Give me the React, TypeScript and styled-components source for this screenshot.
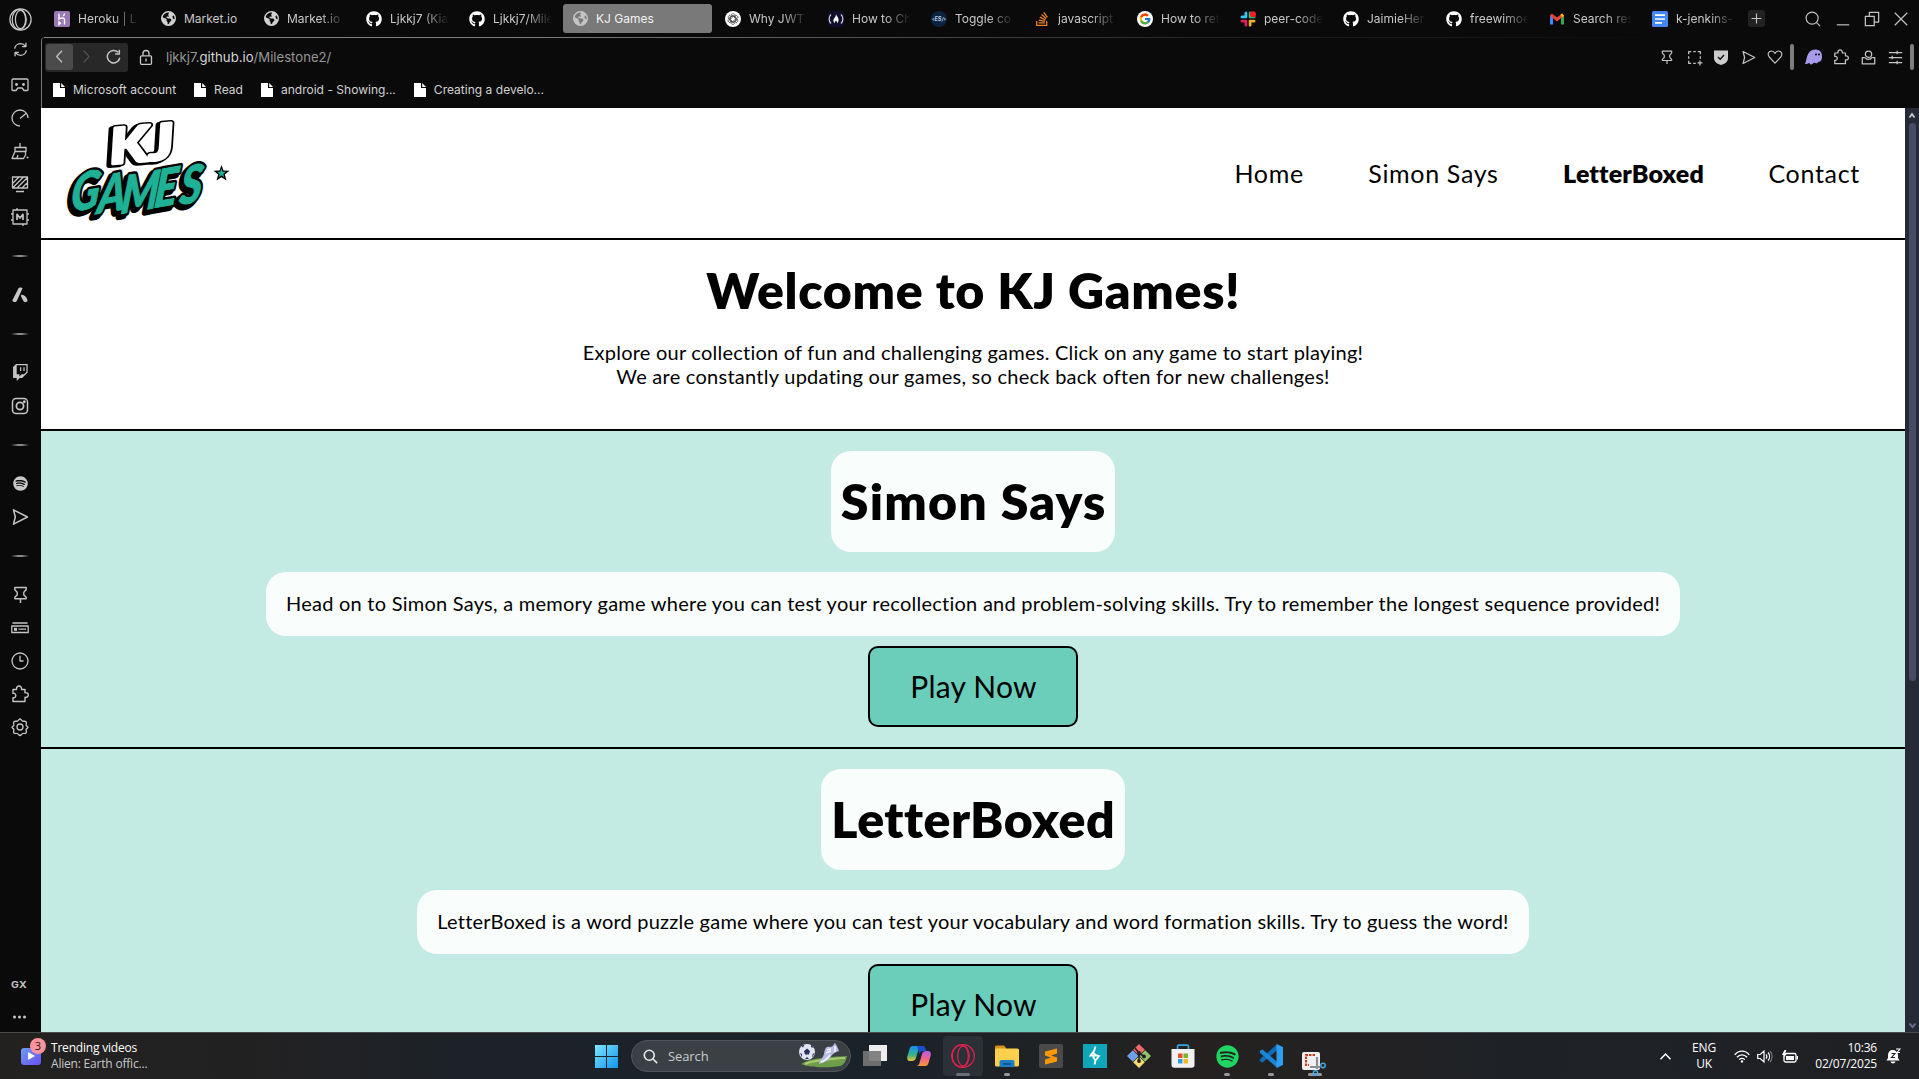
import React from 'react';
import styled, { createGlobalStyle, css } from 'styled-components';
import { FaGithub, FaSpotify, FaStackOverflow } from 'react-icons/fa';
import { FaEarthAmericas } from 'react-icons/fa6';
import { FcGoogle } from 'react-icons/fc';
import { BsTwitch } from 'react-icons/bs';

const GlobalStyle = createGlobalStyle`
  * { box-sizing: border-box; }
  html, body { margin: 0; padding: 0; background: #0a0a0a; overflow: hidden; }
  h1, h2, p { margin: 0; font-weight: inherit; }
  svg { display: block; flex: none; overflow: visible; }
`;

const uiFont = `Inter, 'Liberation Sans', sans-serif`;
const siteFont = `Lato, 'Open Sans', sans-serif`;
const winFont = `'Open Sans', 'Noto Sans', sans-serif`;

const Screen = styled.div`
  width: 1919px;
  height: 1079px;
  display: flex;
  flex-direction: column;
  overflow: hidden;
  background: #0a0a0a;
  color: #c8c8c8;
  font-family: ${uiFont};
`;
const Browser = styled.div`
  height: 1032px;
  display: flex;
`;

/* ---------- sidebar ---------- */
const Sidebar = styled.aside`
  width: 41px;
  display: flex;
  flex-direction: column;
  align-items: center;
  padding-right: 1px;
  flex: none;
`;
const SideCell = styled.div<{ $h?: number }>`
  height: ${(p) => p.$h ?? 33}px;
  width: 40px;
  display: flex;
  align-items: center;
  justify-content: center;
  flex: none;
`;
const SideSeparator = styled.div`
  height: 45px;
  display: flex;
  align-items: center;
  &::before {
    content: '';
    width: 18px;
    height: 2px;
    background: linear-gradient(90deg, transparent, #8a8a8a 40%, #8a8a8a 60%, transparent);
  }
`;
const SideSpacer = styled.div`
  flex: 1;
`;
const GxLabel = styled.span`
  font-size: 10.5px;
  font-weight: 700;
  letter-spacing: 0.3px;
  color: #c4c4c4;
  transform: translateX(-1px) scaleY(0.86);
`;

/* ---------- browser chrome ---------- */
const Main = styled.div`
  flex: 1;
  display: flex;
  flex-direction: column;
  min-width: 0;
`;
const TabBar = styled.div`
  height: 37px;
  display: flex;
  align-items: center;
  padding-left: 4px;
`;
const Tab = styled.div<{ $active?: boolean; $w?: number }>`
  width: ${(p) => p.$w ?? 99}px;
  height: 29px;
  margin-right: 4px;
  padding: 0 2px 0 9px;
  border-radius: 3px;
  display: flex;
  align-items: center;
  gap: 8px;
  flex: none;
  background: ${(p) => (p.$active ? '#797979' : 'transparent')};
  color: ${(p) => (p.$active ? '#f2f2f2' : '#c8c8c8')};
`;
const TabIcon = styled.span`
  width: 16px;
  height: 16px;
  display: flex;
  align-items: center;
  justify-content: center;
  flex: none;
`;
const TabTitle = styled.span<{ $fade?: boolean }>`
  flex: 1;
  white-space: nowrap;
  font-size: 12px;
  line-height: 18px;
  ${(p) =>
    p.$fade &&
    css`
      mask-image: linear-gradient(90deg, #000 52%, transparent 92%);
    `}
`;
const NewTab = styled.div`
  width: 17px;
  height: 17px;
  margin-left: 2px;
  border-radius: 3px;
  background: #222;
  display: flex;
  align-items: center;
  justify-content: center;
`;
const WindowControls = styled.div`
  margin-left: auto;
  margin-right: 3px;
  display: flex;
`;
const ControlButton = styled.div`
  width: 29.3px;
  height: 28px;
  display: flex;
  align-items: center;
  justify-content: center;
`;
const Frame = styled.div`
  height: 71px;
  display: flex;
  flex-direction: column;
  border-left: 1px solid #777;
  border-top-left-radius: 4px;
  position: relative;
  &::before {
    content: '';
    position: absolute;
    top: 0;
    left: 2px;
    right: 0;
    height: 1px;
    background: linear-gradient(90deg, #858585 0, #7c7c7c 500px, #4d4d4d 850px, #242424 1150px, #0c0c0c 1600px);
  }
`;
const Toolbar = styled.div`
  height: 39px;
  padding: 1px 4px 0 3px;
  display: flex;
  align-items: center;
`;
const NavGroup = styled.div`
  width: 83px;
  height: 29px;
  padding: 1px;
  border-radius: 3px;
  background: #282828;
  display: flex;
`;
const NavButton = styled.div<{ $lit?: boolean }>`
  width: 27px;
  height: 26px;
  border-radius: 3px;
  background: ${(p) => (p.$lit ? '#4b4b4b' : 'transparent')};
  display: flex;
  align-items: center;
  justify-content: center;
`;
const Address = styled.div`
  display: flex;
  align-items: center;
  gap: 13px;
  margin-left: 11px;
  font-size: 13.15px;
  color: #979797;
  b {
    font-weight: 400;
    color: #d6d6d6;
  }
`;
const ToolIcons = styled.div`
  margin-left: auto;
  display: flex;
  align-items: center;
`;
const ToolCell = styled.div<{ $w?: number; $inset?: number }>`
  width: ${(p) => p.$w ?? 27}px;
  padding-left: ${(p) => p.$inset ?? 0}px;
  display: flex;
  align-items: center;
  justify-content: center;
`;
const ToolDivider = styled.div`
  width: 4px;
  height: 26px;
  border-radius: 2px;
  background: #7d7d7d;
`;
const Bookmarks = styled.div`
  display: flex;
  align-items: center;
  height: 27px;
  padding-left: 11px;
  gap: 18px;
  font-size: 12px;
  letter-spacing: 0.02px;
  color: #d2d2d2;
`;
const Bookmark = styled.div`
  display: flex;
  align-items: center;
  gap: 8px;
`;

/* ---------- web page ---------- */
const Viewport = styled.div`
  height: 924px;
  display: flex;
`;
const Page = styled.div`
  width: 1864px;
  height: 924px;
  overflow: hidden;
  background: #fff;
  color: #000;
  font-family: ${siteFont};
`;
const Header = styled.header`
  height: 132px;
  border-bottom: 2px solid #000;
  display: flex;
  justify-content: space-between;
  padding: 4px 45px 0 20px;
`;
const NavLinks = styled.nav`
  display: flex;
  align-items: center;
  gap: 64.5px;
  height: 122px;
`;
const NavLink = styled.a<{ $bold?: boolean; $track: number }>`
  font-size: 25px;
  line-height: 30px;
  white-space: nowrap;
  font-weight: ${(p) => (p.$bold ? 800 : 400)};
  letter-spacing: ${(p) => p.$track}px;
`;
const Hero = styled.section`
  height: 191px;
  border-bottom: 2px solid #000;
  text-align: center;
  padding-top: 20px;
`;
const Title = styled.h1<{ $track: number }>`
  font-size: 50px;
  line-height: 60px;
  font-weight: 800;
  letter-spacing: ${(p) => p.$track}px;
  margin-right: -${(p) => p.$track}px;
  white-space: nowrap;
`;
const Copy = styled.p<{ $track: number }>`
  font-size: 20px;
  line-height: 24px;
  letter-spacing: ${(p) => p.$track}px;
  white-space: nowrap;
`;
const HeroCopy = styled.div`
  margin-top: 20px;
`;
const GameSection = styled.section`
  height: 318px;
  padding-top: 20px;
  background: #c4ebe3;
  border-bottom: 2px solid #000;
  display: flex;
  flex-direction: column;
  align-items: center;
`;
const Card = styled.div<{ $w: number }>`
  width: ${(p) => p.$w}px;
  padding-bottom: 2px;
  border-radius: 20px;
  background: #f9fdfc;
  display: flex;
  justify-content: center;
  align-items: center;
`;
const GameTitle = styled(Card)`
  height: 101px;
`;
const GameText = styled(Card)`
  height: 64px;
  margin-top: 20px;
`;
const PlayButton = styled.button`
  width: 210px;
  height: 81px;
  margin-top: 10px;
  border: 2px solid #000;
  border-radius: 10px;
  background: #6bceba;
  color: #000;
  font: 400 30px/36px ${siteFont};
  letter-spacing: 0.2px;
  padding: 0 0 2px 1px;
`;
const ScrollTrack = styled.div`
  width: 14px;
  background: #262a37;
  display: flex;
  flex-direction: column;
  align-items: center;
  padding: 5px 0 4px;
`;
const ScrollThumb = styled.div`
  width: 7px;
  height: 558px;
  margin-top: 5px;
  margin-bottom: auto;
  border-radius: 4px;
  background: #474b63;
`;

/* ---------- taskbar ---------- */
const Taskbar = styled.footer`
  height: 47px;
  border-top: 1px solid #4a4a4c;
  background: linear-gradient(90deg, #232120 0, #222122 250px, #1c2228 480px, #1a222a 850px, #1e2226 1000px, #242120 1180px, #242122 1330px, #1e2226 1500px, #1f2024 1919px);
  display: flex;
  align-items: center;
  font-family: ${winFont};
  color: #fff;
`;
const Widget = styled.div`
  width: 586px;
  flex: none;
  padding-left: 21px;
  display: flex;
  align-items: center;
  gap: 10px;
`;
const WidgetIcon = styled.div`
  width: 20px;
  height: 17px;
  border-radius: 3px;
  background: linear-gradient(135deg, #6a9cf5, #6a4ff0);
  position: relative;
  display: flex;
  align-items: center;
  justify-content: center;
`;
const CountBadge = styled.span`
  position: absolute;
  left: 9px;
  top: -10px;
  width: 16px;
  height: 16px;
  border-radius: 8px;
  background: #f9939d;
  color: #2a1012;
  font-size: 11px;
  line-height: 16px;
  text-align: center;
`;
const WidgetText = styled.div`
  font-size: 12px;
  line-height: 16px;
  letter-spacing: -0.2px;
  white-space: nowrap;
  span {
    display: block;
    color: #c9c9c9;
  }
`;
const TaskCell = styled.div<{ $active?: boolean; $dot?: 'wide' | 'small' }>`
  width: 40px;
  height: 40px;
  margin-right: 4px;
  border-radius: 4px;
  display: flex;
  align-items: center;
  justify-content: center;
  position: relative;
  flex: none;
  background: ${(p) => (p.$active ? '#2b3137' : 'transparent')};
  ${(p) =>
    p.$dot &&
    css`
      &::after {
        content: '';
        position: absolute;
        bottom: 0;
        width: ${p.$dot === 'wide' ? 14 : 6}px;
        height: 3px;
        border-radius: 2px;
        background: ${p.$active ? '#6c7074' : '#96999c'};
      }
    `}
`;
const SnipIcon = styled.svg`
  margin: 15px 2px 0 0;
  z-index: 1;
`;
const SearchBox = styled.div`
  width: 220px;
  height: 32px;
  margin: 0 4px 0 1px;
  border-radius: 16px;
  border: 1px solid #50565b;
  background: #3a4044;
  display: flex;
  align-items: center;
  padding: 0 3px 0 11px;
  color: #c9cccf;
  font-size: 13px;
  letter-spacing: -0.1px;
  span {
    flex: 1;
    margin-left: 10px;
  }
`;
const Tray = styled.div`
  margin-left: auto;
  display: flex;
  align-items: center;
  padding-right: 11px;
  font-size: 12px;
  line-height: 16px;
  letter-spacing: -0.2px;
`;
const TrayText = styled.div<{ $w: number; $right?: boolean }>`
  width: ${(p) => p.$w}px;
  text-align: ${(p) => (p.$right ? 'right' : 'center')};
  white-space: nowrap;
`;
const TrayIcon = styled.div<{ $w: number }>`
  width: ${(p) => p.$w}px;
  display: flex;
  justify-content: center;
`;

/* ---------- icons ---------- */
type LineProps = { size?: number; w?: number; color?: string; children: React.ReactNode };
const Line = ({ size = 18, w = 1.3, color = '#c4c4c4', children }: LineProps) => (
  <svg width={size} height={size} viewBox="0 0 18 18" fill="none" stroke={color} strokeWidth={w} strokeLinejoin="round">
    {children}
  </svg>
);
const PinIcon = ({ size }: { size?: number }) => (
  <Line size={size} w={1.5}>
    <path d="M3 1.500h12v2.500L12.500 6.500v3l2.500 2.500v1.500H3V12l2.500-2.500v-3L3 4zM9 13.500V18" />
  </Line>
);
const SendIcon = ({ size }: { size?: number }) => (
  <Line size={size} w={1.5}>
    <path d="M2.500 1.800 16.500 9 2.500 16.200 4.300 9z" />
  </Line>
);
const PuzzleIcon = ({ size }: { size?: number }) => (
  <Line size={size} w={1.4}>
    <path d="M2 4.500h3.600c-.4-2 .8-3.500 2.400-3.500s2.900 1.500 2.500 3.500H14v3.200c2-.3 3.300.8 3.300 2.300S16 12.600 14 12.300V16.500H2v-3.800c1.700.3 2.800-.8 2.800-2.200S3.700 8 2 8.300z" />
  </Line>
);
const Globe = ({ c = '#d0d0d0' }: { c?: string }) => <FaEarthAmericas size={15} color={c} />;
const Github = () => <FaGithub size={16} color="#fff" />;

const HerokuIcon = () => (
  <svg width="16" height="16" viewBox="0 0 16 16">
    <rect width="16" height="16" rx="2" fill="#9a78b8" />
    <path d="M5 2.500V8c3-1.600 5.500-1.300 5.500.8v4.700M10.500 2.500c0 1-.5 1.800-1.300 2.600M5 10.800v2.700l1.500-1.300z" fill="none" stroke="#fff" strokeWidth="1.400" />
  </svg>
);
const GptIcon = () => (
  <svg width="16" height="16" viewBox="0 0 16 16">
    <circle cx="8" cy="8" r="8" fill="#fff" />
    <g fill="none" stroke="#333" strokeWidth=".75">
      {[0, 60, 120, 180, 240, 300].map((a) => (
        <path key={a} transform={`rotate(${a} 8 8)`} d="M6 8V4.800c0-2.200 2.800-2.800 3.900-1.200M6 5.800l2.200-1.300 2.800 1.600" />
      ))}
    </g>
  </svg>
);
const FccIcon = () => (
  <svg width="18" height="16" viewBox="0 0 18 16">
    <rect x="1" width="16" height="16" rx="3" fill="#0f0f2c" />
    <path d="M4 3.500C1.500 6 1.500 10 4 12.500M14 3.500c2.500 2.500 2.500 6.500 0 9" fill="none" stroke="#cfcfe6" strokeWidth="1.200" />
    <path d="M9 3c.5 2.500 3 3.500 2.500 6.500-.2 1.500-1 2.500-1.500 2.700.3-1.200-.2-2-1-2.700-.8.7-1.300 1.500-1 2.700C7 11.500 6 10 6.500 8.500 7 7 9 5.500 9 3z" fill="#fff" />
  </svg>
);
const Es6Badge = styled.span`
  width: 16px;
  height: 16px;
  border-radius: 8px;
  background: #0c2340;
  color: #b8cbe0;
  font: italic 700 5.5px/16px ${uiFont};
  text-align: center;
`;
const SlackIcon = () => (
  <svg width="16" height="16" viewBox="0 0 16 16" strokeWidth="3" strokeLinecap="round">
    <path d="M6 2v4M2 6h4" stroke="#36c5f0" />
    <path d="M10 2v4M10 6h4" stroke="#2eb67d" />
    <path d="M10 10v4M10 10h4" stroke="#ecb22e" />
    <path d="M6 10v4M2 10h4" stroke="#e01e5a" />
    <path d="M0 8h16M8 0v16" stroke="#0a0a0a" strokeWidth="1" />
    <circle cx="13" cy="3.200" r="3" fill="#f21d1d" />
  </svg>
);
const GmailIcon = () => (
  <svg width="14" height="12" viewBox="0 0 14 12" fill="none" strokeWidth="3">
    <path d="M1.500 2v9.500" stroke="#4285f4" />
    <path d="M12.500 2v9.500" stroke="#34a853" />
    <path d="M.9 1.600 7 6.500l6.100-4.900" stroke="#ea4335" />
    <path d="M11.200 3 13.100 1.600" stroke="#fbbc04" />
  </svg>
);
const DocsIcon = () => (
  <svg width="16" height="16" viewBox="0 0 16 16">
    <rect width="16" height="16" rx="1.500" fill="#4285f4" />
    <path d="M3 4.200h10M3 8h10M3 11.800h7" stroke="#fff" strokeWidth="1.700" />
  </svg>
);
const GoogleIcon = () => (
  <svg width="16" height="16" viewBox="0 0 16 16">
    <circle cx="8" cy="8" r="8" fill="#fff" />
    <g transform="translate(1.500 1.500)"><FcGoogle size={13} /></g>
  </svg>
);
const FileIcon = () => (
  <svg width="12" height="14" viewBox="0 0 12 14">
    <path d="M0 0h7v5h5v9H0z" fill="#fff" />
    <path d="M8.200 0 12 3.900H8.200z" fill="#fff" />
  </svg>
);

const starPath = 'M0-8 2-2.500 8-2.200 3.300 1.600 5 7.500 0 4.200-5 7.500-3.300 1.600-8-2.200-2-2.500z';
const LogoText = styled.text`
  font-family: ${siteFont};
  font-weight: 900;
  font-style: italic;
  stroke-linejoin: round;
`;
type BrushProps = { dx?: number; dy?: number; fill: string; width: number };
const Brush = ({ dx = 0, dy = 0, fill, width }: BrushProps) => (
  <g transform={`translate(${dx + 19} ${dy}) skewX(-12) scale(.78 1)`}>
    <LogoText x="14 49 79 120 152" y="100 102 102 96 93" rotate="-8 -8 -8 -8 -8" fontSize="53" fill={fill} stroke={fill} strokeWidth={width}>GAMES</LogoText>
  </g>
);
const Logo = () => (
  <svg width="176" height="112" viewBox="0 0 176 112">
    <g transform="translate(50 52) rotate(-5)">
      <LogoText x="-3" y="1" fontSize="49" textLength="64" lengthAdjust="spacingAndGlyphs" fill="#000" stroke="#000" strokeWidth="6">KJ</LogoText>
      <LogoText x="0" y="0" fontSize="49" textLength="64" lengthAdjust="spacingAndGlyphs" fill="#000" stroke="#000" strokeWidth="6">KJ</LogoText>
      <LogoText x="0" y="0" fontSize="49" textLength="64" lengthAdjust="spacingAndGlyphs" fill="#fff" stroke="#fff" strokeWidth="3">KJ</LogoText>
    </g>
    <Brush dx={-3} dy={3} fill="#000" width={7} />
    <Brush fill="#000" width={6} />
    <Brush fill="#1fb195" width={1} />
    <path transform="translate(160.500 61)" d={starPath} fill="#000" />
    <path transform="translate(160.500 61) scale(.55)" d={starPath} fill="#1fb195" />
  </svg>
);

const tabs: { icon: React.ReactNode; title: string; fade?: boolean; active?: boolean; w?: number }[] = [
  { icon: <HerokuIcon />, title: 'Heroku | L', fade: true, w: 102 },
  { icon: <Globe />, title: 'Market.io' },
  { icon: <Globe />, title: 'Market.io', fade: true },
  { icon: <Github />, title: 'Ljkkj7 (Kia', fade: true },
  { icon: <Github />, title: 'Ljkkj7/Mile', fade: true },
  { icon: <Globe c="#c4c4c4" />, title: 'KJ Games', active: true, w: 149 },
  { icon: <GptIcon />, title: 'Why JWT', fade: true },
  { icon: <FccIcon />, title: 'How to Ch', fade: true },
  { icon: <Es6Badge>‹ES/›</Es6Badge>, title: 'Toggle co', fade: true },
  { icon: <FaStackOverflow size={16} color="#f48024" />, title: 'javascript', fade: true },
  { icon: <GoogleIcon />, title: 'How to ret', fade: true },
  { icon: <SlackIcon />, title: 'peer-code', fade: true },
  { icon: <Github />, title: 'JaimieHer', fade: true },
  { icon: <Github />, title: 'freewimoe', fade: true },
  { icon: <GmailIcon />, title: 'Search res', fade: true },
  { icon: <DocsIcon />, title: 'k-jenkins-', fade: true },
];

const games = [
  {
    name: 'Simon Says',
    boxWidth: 284,
    titleTrack: 1.2,
    textWidth: 1414,
    textTrack: 0.25,
    text: 'Head on to Simon Says, a memory game where you can test your recollection and problem-solving skills. Try to remember the longest sequence provided!',
  },
  {
    name: 'LetterBoxed',
    boxWidth: 304,
    titleTrack: 0.5,
    textWidth: 1112,
    textTrack: 0.21,
    text: 'LetterBoxed is a word puzzle game where you can test your vocabulary and word formation skills. Try to guess the word!',
  },
];

const SidebarPanel = () => (
  <Sidebar>
    <SideCell $h={38}>
      <Line size={23} w={1}>
        <ellipse cx="9" cy="9" rx="8.300" ry="8.300" /><ellipse cx="9" cy="9" rx="4" ry="7.200" /><ellipse cx="8" cy="9" rx="5.500" ry="8" />
      </Line>
    </SideCell>
    <SideCell $h={22}>
      <Line size={15} w={1.600}>
        <path d="M2 8C2.500 4 6 2 9 2c2.500 0 4.500 1 6 3.200M15.500 1v4.500H11M16 10c-.5 4-4 6-7 6-2.500 0-4.500-1-6-3.200M2.500 17v-4.500H7" />
      </Line>
    </SideCell>
    <SideCell $h={8} />
    <SideCell>
      <Line>
        <path d="M1.800 3h14.400l.8.800V14l-.8.500H13L11.200 12H6.800L5 14.500H1.800L1 14V3.800z" /><circle cx="5.500" cy="8.500" r=".8" fill="#c4c4c4" /><circle cx="12.500" cy="8.500" r=".8" fill="#c4c4c4" />
      </Line>
    </SideCell>
    <SideCell>
      <Line><path d="M9 17A8 8 0 1 1 17 9M9 9.500l6-5" /></Line>
    </SideCell>
    <SideCell>
      <Line><path d="M9 1v4M4 5.500h11v4H4zM4 9.500 1 16.500h11.500l2-3.500V9.500M6 16l1-3" /><circle cx="16.500" cy="15.500" r="1" fill="#c4c4c4" stroke="none" /></Line>
    </SideCell>
    <SideCell>
      <Line><path d="M1.500 2h15v11h-15zM5 16.500h8M2 8l6-6M2 12.500 12.500 2M6 13 16 3M11 13l5-5" /></Line>
    </SideCell>
    <SideCell>
      <Line>
        <path d="M2 2h14v14H2zM0 6h2M0 12h2M16 6h2M16 12h2M6 0v2M12 16v2" />
        <path d="M6 12V6.300L9 10l3-3.700V12" strokeWidth="1.700" />
      </Line>
    </SideCell>
    <SideSeparator />
    <SideCell>
      <svg width="18" height="18" viewBox="0 0 18 18" fill="#c8c8c8"><path d="M7.500 2.200c.6-1 3.400-1 4 .2L6 14.500c-1.200 2.300-4.600 1.700-4.600-.3zM10.200 8.800c3.300-.3 6.300 3 6.300 6.500-1.500 1.500-4 .7-4.700-1.300-.3-1.600-2.600-3.400-1.600-5.200z" /></svg>
    </SideCell>
    <SideSeparator />
    <SideCell><BsTwitch size={17} color="#c4c4c4" /></SideCell>
    <SideCell>
      <Line w={1.5}><rect x="1.500" y="1.500" width="15" height="15" rx="3.500" /><circle cx="9" cy="9" r="3.600" strokeWidth="1.800" /><circle cx="13.300" cy="4.700" r=".7" fill="#c4c4c4" /></Line>
    </SideCell>
    <SideSeparator />
    <SideCell><FaSpotify size={15} color="#c8c8c8" /></SideCell>
    <SideCell><SendIcon /></SideCell>
    <SideSeparator />
    <SideCell><PinIcon size={17} /></SideCell>
    <SideCell>
      <Line><path d="M1.500 4h15M.8 7h16.400v6.500H.8zM7.500 10.200h7.500" /><path d="M3 8.800h3v3H3z" fill="#c4c4c4" stroke="none" /></Line>
    </SideCell>
    <SideCell><Line><circle cx="9" cy="9" r="8" /><path d="M9 3.800V9h3.500" /></Line></SideCell>
    <SideCell><PuzzleIcon /></SideCell>
    <SideCell>
      <Line>
        <path d="M9 1c1 0 1.700 1.800 2.600 2.100C12.800 3.500 14.500 2.900 15.200 4c.8 1.100-.2 2.300-.1 3.300.1 1 1.900 1.200 1.900 2s-1.800 1.300-1.900 2.200c-.1 1 .9 2.300.1 3.300-.7 1-2.400.3-3.500.7-1 .4-1.700 2-2.700 2s-1.700-1.600-2.700-2c-1.100-.4-2.800.3-3.500-.7-.8-1 .2-2.300.1-3.300C2.800 10.600 1 10.100 1 9.300s1.800-1 1.900-2C3 6.300 2 5.100 2.800 4c.7-1.100 2.400-.5 3.600-.9C7.300 2.800 8 1 9 1z" />
        <circle cx="9" cy="9" r="3" />
      </Line>
    </SideCell>
    <SideSpacer />
    <SideCell $h={35}><GxLabel>GX</GxLabel></SideCell>
    <SideCell $h={30}>
      <svg width="14" height="4" viewBox="0 0 14 4" fill="#c8c8c8"><circle cx="1.500" cy="2" r="1.500" /><circle cx="6.500" cy="2" r="1.500" /><circle cx="11.500" cy="2" r="1.500" /></svg>
    </SideCell>
  </Sidebar>
);

const ChromeBars = () => (
  <>
    <TabBar>
      {tabs.map((t, i) => (
        <Tab key={i} $active={t.active} $w={t.w}>
          <TabIcon>{t.icon}</TabIcon>
          <TabTitle $fade={t.fade}>{t.title}</TabTitle>
        </Tab>
      ))}
      <NewTab><Line size={11} w={1.800}><path d="M9 1v16M1 9h16" /></Line></NewTab>
      <WindowControls>
        <ControlButton><Line size={16}><circle cx="8" cy="8" r="6.800" /><path d="m13 13 4 4" /></Line></ControlButton>
        <ControlButton><Line size={14} w={1.500}><path d="M1 16.500h16" /></Line></ControlButton>
        <ControlButton><Line size={16} w={1.400}><path d="M1.500 6h10v10.500h-10zM6 6V1.500h10.500v11H11.500" /></Line></ControlButton>
        <ControlButton><Line size={14} w={1.500}><path d="m1 1 16 16M17 1 1 17" /></Line></ControlButton>
      </WindowControls>
    </TabBar>
    <Frame>
      <Toolbar>
        <NavGroup>
          <NavButton $lit><Line size={13} w={1.800}><path d="M12.500 1 5 9l7.500 8" /></Line></NavButton>
          <NavButton><Line size={13} w={1.500} color="#5c5c5c"><path d="M5 1l7.500 8L5 17" /></Line></NavButton>
          <NavButton><Line size={15} w={1.800}><path d="M16.500 10.500A7.500 7.500 0 1 1 14.500 4M16 1v5h-5" /></Line></NavButton>
        </NavGroup>
        <Address>
          <svg width="14" height="15" viewBox="0 0 14 15" fill="none" stroke="#c8c8c8" strokeWidth="1.300"><rect x="1.500" y="5.800" width="11" height="8.500" rx="1" /><path d="M4 5.800V3.500a3 3 0 0 1 6 0v2.300M7 8.500v3" /></svg>
          <span>ljkkj7.<b>github.io</b>/Milestone2/</span>
        </Address>
        <ToolIcons>
          <ToolCell><PinIcon size={14} /></ToolCell>
          <ToolCell><Line size={15} w={1.500}><path d="M2 5V2h3M7.500 2h3M13 2h3v3M16 7.500v3M2 7.500v3M2 13v3h3M7.500 16h3M15.500 12.500v6M12.500 15.500h6" /></Line></ToolCell>
          <ToolCell>
            <svg width="14" height="15" viewBox="0 0 14 15"><path d="M0 .5h14V8c0 4-3.500 6-7 7-3.500-1-7-3-7-7z" fill="#ccc" /><path d="m4 7 2.200 2.300L10 5" fill="none" stroke="#111" strokeWidth="1.400" /></svg>
          </ToolCell>
          <ToolCell><SendIcon size={15} /></ToolCell>
          <ToolCell><Line size={16}><path d="M9 16 2.500 9C0 5.500 2 2.200 5 2.200c2 0 3.300 1.300 4 2.800.7-1.500 2-2.800 4-2.800 3 0 5 3.300 2.500 6.800z" /></Line></ToolCell>
          <ToolCell $w={7}><ToolDivider /></ToolCell>
          <ToolCell $w={32} $inset={4}>
            <svg width="17" height="16" viewBox="0 0 17 16"><path d="M0 15C2 12 1 1 10 .500c5-.3 7 3 7 7 0 3-1 5-2.500 5-1.200 0-1.500 1.500-3 1.800-1.200.2-1.500-1-2.500-.5S7.500 15.500 6 15.500s-1-1.700-2-1.500-2 1.500-4 1z" fill="#a89aea" /><circle cx="11" cy="5.500" r="1" fill="#0a0a0a" /><circle cx="14" cy="5.500" r="1" fill="#0a0a0a" /></svg>
          </ToolCell>
          <ToolCell $w={27.500}><PuzzleIcon size={16} /></ToolCell>
          <ToolCell><Line size={15} w={1.500}><circle cx="9" cy="5" r="3.800" /><path d="M4.500 9H1.500v7.500h15V9h-3M5 9c1 3 7 3 8 0" /></Line></ToolCell>
          <ToolCell><Line size={15} w={1.500}><path d="M1 3h16M1 9h16M1 15h16M11 1v4M5 7v4M11 13v4" /></Line></ToolCell>
          <ToolCell $w={6}><ToolDivider /></ToolCell>
        </ToolIcons>
      </Toolbar>
      <Bookmarks>
        {['Microsoft account', 'Read', 'android - Showing...', 'Creating a develo...'].map((b) => (
          <Bookmark key={b}><FileIcon />{b}</Bookmark>
        ))}
      </Bookmarks>
    </Frame>
  </>
);

const WebPage = () => (
  <Viewport>
    <Page>
      <Header>
        <Logo />
        <NavLinks>
          <NavLink $track={0.65}>Home</NavLink>
          <NavLink $track={0.67}>Simon Says</NavLink>
          <NavLink $bold $track={0.15}>LetterBoxed</NavLink>
          <NavLink $track={0.7}>Contact</NavLink>
        </NavLinks>
      </Header>
      <Hero>
        <Title $track={0.68}>Welcome to KJ Games!</Title>
        <HeroCopy>
          <Copy $track={0.23}>Explore our collection of fun and challenging games. Click on any game to start playing!</Copy>
          <Copy $track={0.26}>We are constantly updating our games, so check back often for new challenges!</Copy>
        </HeroCopy>
      </Hero>
      {games.map((g) => (
        <GameSection key={g.name}>
          <GameTitle $w={g.boxWidth}><Title as="h2" $track={g.titleTrack}>{g.name}</Title></GameTitle>
          <GameText $w={g.textWidth}><Copy $track={g.textTrack}>{g.text}</Copy></GameText>
          <PlayButton>Play Now</PlayButton>
        </GameSection>
      ))}
    </Page>
    <ScrollTrack>
      <svg width="6" height="5" viewBox="0 0 6 5" fill="none" stroke="#c8cad4" strokeWidth="1.800"><path d="M.5 4.500 3 1l2.500 3.500" /></svg>
      <ScrollThumb />
      <svg width="7" height="5" viewBox="0 0 7 5" fill="none" stroke="#70748a" strokeWidth="1.800"><path d="M.5.500 3.500 4 6.500.500" /></svg>
    </ScrollTrack>
  </Viewport>
);

const TaskbarPanel = () => (
  <Taskbar>
    <Widget>
      <WidgetIcon>
        <svg width="7" height="8" viewBox="0 0 7 8"><path d="M0 0l7 4-7 4z" fill="#fff" /></svg>
        <CountBadge>3</CountBadge>
      </WidgetIcon>
      <WidgetText>Trending videos<span>Alien: Earth offic...</span></WidgetText>
    </Widget>
    <TaskCell>
      <svg width="23" height="23" viewBox="0 0 23 23">
        <defs><linearGradient id="win" gradientUnits="userSpaceOnUse" x1="0" y1="0" x2="23" y2="23"><stop offset="0" stopColor="#7fe6fd" /><stop offset="1" stopColor="#0f93ee" /></linearGradient></defs>
        <path d="M0 0h11v11H0zM12 0h11v11H12zM0 12h11v11H0zM12 12h11v11H12z" fill="url(#win)" />
      </svg>
    </TaskCell>
    <SearchBox>
      <Line size={15} w={2} color="#e4e6e8"><circle cx="7.500" cy="7.500" r="6" /><path d="m12 12 5 5" /></Line>
      <span>Search</span>
      <svg width="48" height="26" viewBox="0 0 48 26">
        <path d="M2 21c8-6 30-7 46-8-1 5-3 9-7 10-12 2-30 2-39-2z" fill="#6e9e4a" />
        <path d="M6 21c10-4 26-5 40-6" stroke="#a9cb72" strokeWidth="2" fill="none" />
        <circle cx="8" cy="9" r="8" fill="#e2e6f4" />
        <path d="m8 5.500 3 2.500-1 3.500H6L5 8zM2 2.800l3.500-1L4 4.500zM12 1.800l3 3-3-.5zM1 10l2 1v3.500zM15.700 10l-2 1-.7 4zM6 16l2-2 2 2z" fill="#27305f" />
        <path d="M20 21c0-3 4-6 5-10 .5-3 1-6 3-7 2-.5 3 .5 5-.5 2-1 2-3 3-3.500 1.500 2 3 5 4 8-4 1-7 3-9 7-2 3-6 4-8 5z" fill="#b9bbe8" />
        <path d="M28 7l4-1M27 10l5-2M36 3l0 6M22 19c4-1 6-3 9-7" stroke="#f6f6ff" strokeWidth="1.600" fill="none" />
      </svg>
    </SearchBox>
    <TaskCell>
      <svg width="24" height="22" viewBox="0 0 24 22"><rect x="6" y="0" width="18" height="16" fill="#ededed" /><rect x="0" y="6" width="18" height="15" fill="#777" opacity=".9" /></svg>
    </TaskCell>
    <TaskCell>
      <svg width="24" height="22" viewBox="0 0 24 22">
        <defs>
          <linearGradient id="cpA" x1="0" y1="0" x2="0" y2="1"><stop offset="0" stopColor="#1c8df0" /><stop offset=".6" stopColor="#34b58a" /><stop offset="1" stopColor="#f0c12c" /></linearGradient>
          <linearGradient id="cpB" x1="0" y1="0" x2="0" y2="1"><stop offset="0" stopColor="#b05cf0" /><stop offset=".5" stopColor="#f0648c" /><stop offset="1" stopColor="#f99a3c" /></linearGradient>
        </defs>
        <path d="M6 1h9c-2 0-3 1-3.500 3L9 13c-.6 2-2 3-4 3H3c-2.500 0-3.300-2-2.700-4.500L2.500 4C3 2 4 1 6 1z" fill="url(#cpA)" />
        <path d="M12 1h3.500C17.500 1 18 2 18.600 4l.8 2H16c-2 0-3 1-3.500 3L10 1.500z" fill="#1c50c8" />
        <path d="M18 21H9c2 0 3-1 3.500-3L15 9c.6-2 2-3 4-3h2c2.500 0 3.300 2 2.700 4.500L21.500 18c-.5 2-1.500 3-3.500 3z" fill="url(#cpB)" />
      </svg>
    </TaskCell>
    <TaskCell $active $dot="wide">
      <svg width="24" height="24" viewBox="0 0 24 24" fill="none" stroke="#e0224e" strokeWidth="1.200"><circle cx="12" cy="12" r="11.300" /><ellipse cx="12" cy="12" rx="5.300" ry="10" /><ellipse cx="9.800" cy="12" rx="8.500" ry="11" /></svg>
    </TaskCell>
    <TaskCell $dot="small">
      <svg width="24" height="22" viewBox="0 0 24 22">
        <path d="M0 2c0-1 .6-1.500 1.500-1.500H9l2 2.500v4H0z" fill="#d8921c" />
        <rect y="3.500" width="24" height="18" rx="1.500" fill="#fbd04c" />
        <path d="M4.500 22v-5c0-1.200.8-2 2-2h11c1.200 0 2 .8 2 2v5z" fill="#1d7dc8" /><path d="M8 19h8" stroke="#0e5593" strokeWidth="2" />
      </svg>
    </TaskCell>
    <TaskCell>
      <svg width="24" height="24" viewBox="0 0 24 24"><rect width="24" height="24" rx="2" fill="#4a4a4a" /><path d="M18 4.500v5l-6 1.900 6 2.100v4L6 20.500v-5l6-2-6-2.100v-4z" fill="#ff9800" /></svg>
    </TaskCell>
    <TaskCell>
      <svg width="24" height="24" viewBox="0 0 24 24"><rect width="24" height="24" fill="#0ea5b9" /><path d="M12.500 2.500 11 7 7.500 11.500h7M11.500 20.500l1-4 3.500-4.500-3.500-1L10 8.500M12 16l-2-3.500" fill="none" stroke="#fff" strokeWidth="1.800" /></svg>
    </TaskCell>
    <TaskCell>
      <svg width="24" height="24" viewBox="0 0 24 24">
        <path d="M12 0l5.800 5.800L12 11.500 6.200 5.800z" fill="#ee6a6a" /><path d="M18.200 6.200 24 12l-5.800 5.800L12.500 12z" fill="#8fc46a" /><path d="M5.800 6.200 11.500 12l-5.700 5.800L0 12z" fill="#6f9fe8" /><path d="M12 12.500l5.800 5.700L12 24l-5.800-5.800z" fill="#f7dc70" />
        <path d="M8 4l4 5v8M12 9l5 3.500" stroke="#241f20" strokeWidth="1.600" fill="none" /><circle cx="12" cy="9" r="1.900" fill="#241f20" /><circle cx="12" cy="17" r="1.900" fill="#241f20" /><circle cx="17" cy="12.500" r="1.900" fill="#241f20" />
      </svg>
    </TaskCell>
    <TaskCell>
      <svg width="24" height="24" viewBox="0 0 24 24">
        <path d="M6.500 6V2.500c0-.8.500-1.300 1.300-1.300h8.400c.8 0 1.300.500 1.300 1.300V6" fill="none" stroke="#3aa5e0" strokeWidth="1.700" />
        <path d="M.5 5h23v16c0 1.700-1 2.700-2.700 2.700H3.200C1.500 23.700.5 22.700.5 21z" fill="#f1f1f3" />
        <path d="M7 9.500h4.500V14H7z" fill="#e8502b" /><path d="M12.500 9.500H17V14h-4.500z" fill="#7cb52b" /><path d="M7 15h4.500v4.500H7z" fill="#2a9ce0" /><path d="M12.500 15H17v4.500h-4.500z" fill="#f8b423" />
      </svg>
    </TaskCell>
    <TaskCell $dot="small"><FaSpotify size={23} color="#1fd662" /></TaskCell>
    <TaskCell $dot="small">
      <svg width="24" height="24" viewBox="0 0 24 24">
        <path d="M18 .3v6L3.500 18.500.8 17.300v-2z" fill="#0f6db8" /><path d="M18 23.700v-6L3.500 5.500.8 6.700v2z" fill="#1a86d6" /><path d="M17.500 0l6.500 3v18l-6.500 3z" fill="#2f9df0" />
      </svg>
    </TaskCell>
    <TaskCell $dot="wide">
      <SnipIcon width="24" height="24" viewBox="0 0 24 24">
        <rect x="0" y="0" width="18" height="18" rx="2" fill="#f0f0f2" />
        <path d="M13 3H4v10h3" fill="none" stroke="#c9401f" strokeWidth="2.200" strokeDasharray="2.500 1" /><path d="M15 5v12M8 15h10" stroke="#8a8f96" strokeWidth="2.200" />
        <circle cx="21" cy="13.500" r="2.200" fill="none" stroke="#45a9e0" strokeWidth="1.500" /><circle cx="13.500" cy="21" r="2.200" fill="none" stroke="#45a9e0" strokeWidth="1.500" />
      </SnipIcon>
    </TaskCell>
    <Tray>
      <TrayIcon $w={36}>
        <svg width="11" height="7" viewBox="0 0 11 7" fill="none" stroke="#fff" strokeWidth="1.500"><path d="M.5 6.200 5.500 1l5 5.200" /></svg>
      </TrayIcon>
      <TrayText $w={42}>ENG<br />UK</TrayText>
      <TrayIcon $w={33}>
        <svg width="16" height="13" viewBox="0 0 16 13" fill="none" stroke="#fff" strokeWidth="1.300"><path d="M.7 4.800c4-4.800 10.600-4.800 14.600 0M2.900 7.300c3-3.300 7.200-3.300 10.200 0M5.200 9.600c1.700-1.700 3.900-1.700 5.600 0" /><circle cx="8" cy="11.400" r="1.200" fill="#fff" stroke="none" /></svg>
      </TrayIcon>
      <TrayIcon $w={14}>
        <svg width="16" height="13" viewBox="0 0 16 13" fill="none" stroke="#fff" strokeWidth="1.200"><path d="M.7 4.500h2.500L7 1v11L3.200 8.500H.7zM9 4.300c1 1.300 1 3.100 0 4.400M11 2.500c2 2.300 2 5.700 0 8" /><path d="M13 1c2.800 3 2.800 8 0 11" stroke="#777" /></svg>
      </TrayIcon>
      <TrayIcon $w={36}>
        <svg width="16" height="13" viewBox="0 0 16 13"><rect x="2" y="3.500" width="12" height="8.500" rx="1.500" fill="none" stroke="#fff" strokeWidth="1.300" /><path d="M4 6h8v4H4z" fill="#fff" /><path d="M14.500 6H16v3.500h-1.500zM2.500 0 0 5h2l-.5 3L5 3.500H3L4.500 0z" fill="#fff" /></svg>
      </TrayIcon>
      <TrayText $w={69} $right>10:36<br />02/07/2025</TrayText>
      <TrayIcon $w={31}>
        <svg width="14" height="15" viewBox="0 0 14 15"><path d="M2 6c0-3 2-5 4.500-5S12 3 12 6v3l1.500 2.500h-13L2 9zM4.500 12.500h5c-.5 2.500-4.500 2.500-5 0z" fill="#fff" /><path d="M5.500 4.500h3.500l-3.500 4H9" fill="none" stroke="#202126" strokeWidth="1.100" /><path d="M10 0h4l-3 3.500h3" fill="none" stroke="#fff" strokeWidth="1.100" /></svg>
      </TrayIcon>
    </Tray>
  </Taskbar>
);

export default function App() {
  return (
    <Screen>
      <GlobalStyle />
      <Browser>
        <SidebarPanel />
        <Main>
          <ChromeBars />
          <WebPage />
        </Main>
      </Browser>
      <TaskbarPanel />
    </Screen>
  );
}
